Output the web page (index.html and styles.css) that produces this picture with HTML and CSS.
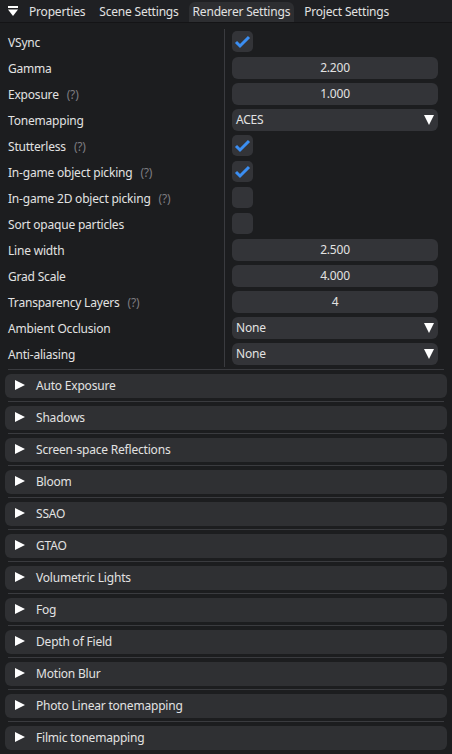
FILE: index.html
```html
<!DOCTYPE html>
<html lang="en">
<head>
  <meta charset="UTF-8" />
  <meta name="viewport" content="width=device-width, initial-scale=1.0"/>
  <title>Renderer Settings</title>
  <link rel="stylesheet" href="styles.css">
</head>
<body>
  <div class="tabbar">
    <svg class="menu-icon" width="10" height="11" viewBox="0 0 10 11">
      <rect x="0" y="0" width="10" height="2" fill="#fff"/>
      <polygon points="0,3.5 10,3.5 5,10" fill="#fff"/>
    </svg>
    <div class="tab">Properties</div>
    <div class="tab">Scene Settings</div>
    <div class="tab active">Renderer Settings</div>
    <div class="tab">Project Settings</div>
  </div>

  <div class="props">
    <div class="label">VSync</div>
    <div class="value"><div class="check on"></div></div>

    <div class="label">Gamma</div>
    <div class="value"><div class="field">2.200</div></div>

    <div class="label">Exposure <span class="help">(?)</span></div>
    <div class="value"><div class="field">1.000</div></div>

    <div class="label">Tonemapping</div>
    <div class="value"><div class="combo">ACES</div></div>

    <div class="label">Stutterless <span class="help">(?)</span></div>
    <div class="value"><div class="check on"></div></div>

    <div class="label">In-game object picking <span class="help">(?)</span></div>
    <div class="value"><div class="check on"></div></div>

    <div class="label">In-game 2D object picking <span class="help">(?)</span></div>
    <div class="value"><div class="check"></div></div>

    <div class="label">Sort opaque particles</div>
    <div class="value"><div class="check"></div></div>

    <div class="label">Line width</div>
    <div class="value"><div class="field">2.500</div></div>

    <div class="label">Grad Scale</div>
    <div class="value"><div class="field">4.000</div></div>

    <div class="label">Transparency Layers <span class="help">(?)</span></div>
    <div class="value"><div class="field">4</div></div>

    <div class="label">Ambient Occlusion</div>
    <div class="value"><div class="combo">None</div></div>

    <div class="label">Anti-aliasing</div>
    <div class="value"><div class="combo">None</div></div>
  </div>

  <div class="sep"></div>

  <div class="sections">
    <div class="header">Auto Exposure</div>
    <div class="sep"></div>
    <div class="header">Shadows</div>
    <div class="sep"></div>
    <div class="header">Screen-space Reflections</div>
    <div class="sep"></div>
    <div class="header">Bloom</div>
    <div class="sep"></div>
    <div class="header">SSAO</div>
    <div class="sep"></div>
    <div class="header">GTAO</div>
    <div class="sep"></div>
    <div class="header">Volumetric Lights</div>
    <div class="sep"></div>
    <div class="header">Fog</div>
    <div class="sep"></div>
    <div class="header">Depth of Field</div>
    <div class="sep"></div>
    <div class="header">Motion Blur</div>
    <div class="sep"></div>
    <div class="header">Photo Linear tonemapping</div>
    <div class="sep"></div>
    <div class="header">Filmic tonemapping</div>
  </div>
</body>
</html>
```

FILE: styles.css
```css
body {
  margin: 0;
  background: #1c1d1f;
  color: #e2e2e2;
  font-family: "Noto Sans", "Open Sans", sans-serif;
  font-size: 12px;
  letter-spacing: -0.2px;
  height: 754px;
  overflow: hidden;
}

.tabbar {
  display: flex;
  align-items: flex-end;
  gap: 6px;
  height: 22px;
  padding-left: 8px;
  background: #1f2023;
  border-bottom: 1px solid #141416;
}

.menu-icon {
  align-self: center;
  margin-right: 1px;
}

.tab {
  height: 20px;
  line-height: 20px;
  padding: 0 4px;
  border-radius: 6px 6px 0 0;
}

.tab.active {
  background: #2d2e31;
}

.props {
  display: grid;
  grid-template-columns: 216px 214px;
  grid-auto-rows: 26px;
  padding: 6px 0 0 8px;
}

.label {
  display: flex;
  align-items: center;
  white-space: nowrap;
}

.help {
  color: #7c7c80;
  margin-left: 8px;
}

.value {
  border-left: 1px solid #3a3b3f;
  padding: 2px 0 2px 7px;
}

.field,
.combo {
  height: 22px;
  line-height: 22px;
  background: #333438;
  border-radius: 6px;
}

.field {
  text-align: center;
}

.combo {
  position: relative;
  padding-left: 4px;
}

.combo::after {
  content: "";
  position: absolute;
  right: 4px;
  top: 6px;
  border-left: 5.5px solid transparent;
  border-right: 5.5px solid transparent;
  border-top: 10px solid #fff;
}

.check {
  width: 21px;
  height: 21px;
  background: #333438;
  border-radius: 5px;
}

.check.on {
  background: #333438 url("data:image/svg+xml,%3Csvg xmlns='http://www.w3.org/2000/svg' width='21' height='21'%3E%3Cpolyline points='4,11 8,15 17,6' fill='none' stroke='%233b8ef2' stroke-width='3'/%3E%3C/svg%3E") no-repeat;
}

.sep {
  height: 1px;
  background: #3a3b3f;
  margin: 2px 8px 4px;
}

.sections .sep {
  margin: 3px 8px 4px;
}

.header {
  position: relative;
  height: 24px;
  line-height: 24px;
  margin: 0 5px;
  padding-left: 31px;
  background: #2f3033;
  border-radius: 6px;
}

.header::before {
  content: "";
  position: absolute;
  left: 10px;
  top: 6px;
  border-top: 5.5px solid transparent;
  border-bottom: 5.5px solid transparent;
  border-left: 10px solid #fff;
}
```
